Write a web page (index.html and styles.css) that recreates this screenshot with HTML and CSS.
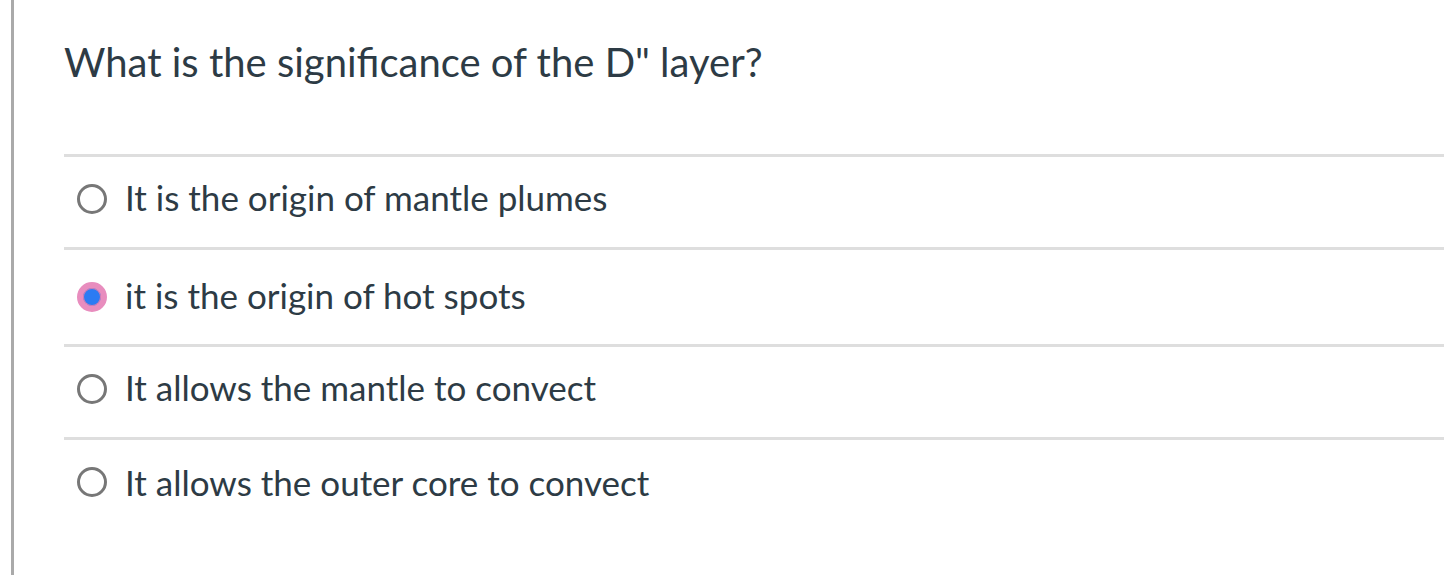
FILE: index.html
```html
<!DOCTYPE html>
<html>
<head>
<meta charset="utf-8">
<link rel="stylesheet" href="styles.css">
</head>
<body>
<div class="quiz">
  <div class="question">What is the significance of the D" layer?</div>
  <div class="answers">
    <label class="answer">
      <span class="radio"></span>
      <span class="text">It is the origin of mantle plumes</span>
    </label>
    <label class="answer answer-selected">
      <span class="radio radio-checked"></span>
      <span class="text">it is the origin of hot spots</span>
    </label>
    <label class="answer">
      <span class="radio"></span>
      <span class="text">It allows the mantle to convect</span>
    </label>
    <label class="answer answer-last">
      <span class="radio"></span>
      <span class="text">It allows the outer core to convect</span>
    </label>
  </div>
</div>
</body>
</html>
```
FILE: styles.css
```css
html, body {
  margin: 0;
  padding: 0;
  background: #fff;
}
body {
  font-family: Lato, "Liberation Sans", sans-serif;
  color: #2d3b45;
  height: 575px;
  overflow: hidden;
}
.quiz {
  margin-left: 11px;
  border-left: 3px solid #aaaaaa;
  height: 575px;
  padding-left: 50px;
  box-sizing: border-box;
}
.question {
  font-size: 40px;
  line-height: 48px;
  padding-top: 38px;
  height: 114px;
  box-sizing: border-box;
}
.answers {
  padding-top: 40px;
}
.answer {
  display: flex;
  align-items: center;
  border-top: 3px solid #dedede;
  height: 84px;
  padding-left: 13px;
  padding-bottom: 6px;
  gap: 18px;
}
.answer-selected {
  height: 94px;
  padding-bottom: 0;
}
.radio {
  width: 30px;
  height: 30px;
  box-sizing: border-box;
  border: 3px solid #777;
  border-radius: 50%;
  flex: none;
}
.radio-checked {
  border: 6px solid #e88dbe;
  background: #2b7bf3;
  box-shadow: inset 0 0 0 1px #d97bae;
}
.text {
  font-size: 35px;
  line-height: 40px;
  padding-bottom: 5px;
}
.answer-last .text {
  padding-bottom: 0;
}
```
